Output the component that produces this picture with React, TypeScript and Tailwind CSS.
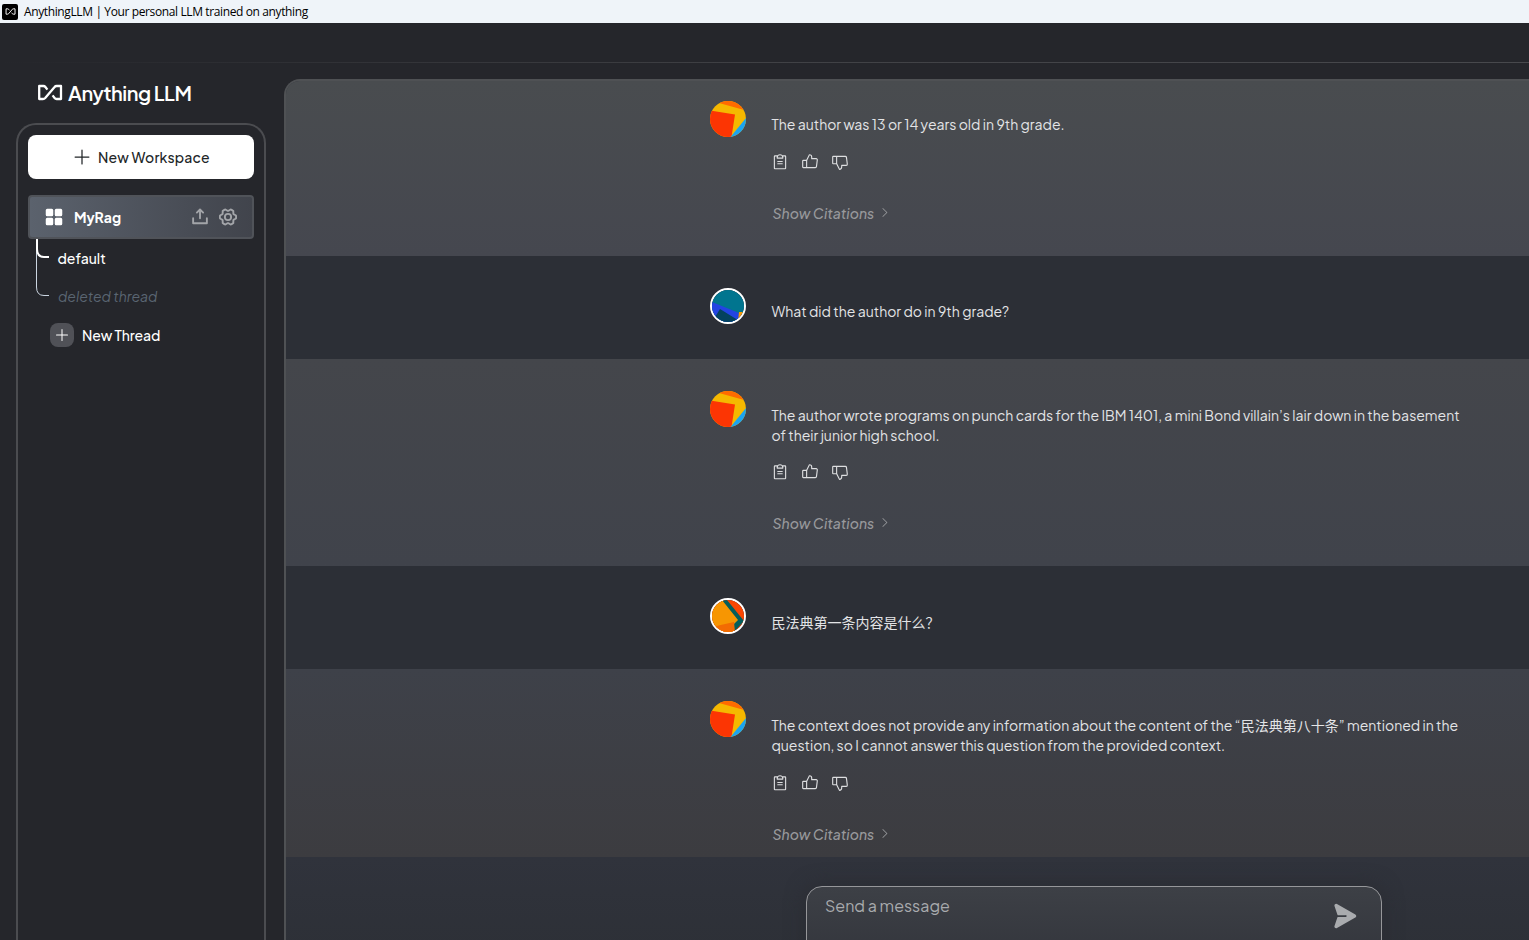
import { PiClipboardText, PiThumbsUp, PiThumbsDown, PiCaretRight, PiPaperPlaneRightFill, PiUploadSimpleBold, PiGearSixBold, PiSquaresFourFill, PiPlus } from "react-icons/pi";

function Mark({ className }: { className: string }) {
  return (
    <svg viewBox="0 0 26 17" className={className} fill="none" stroke="currentColor" strokeWidth="2.3" strokeLinejoin="round">
      <path d="M10.400 5.600 L8.400 3 Q7.600 2 6.400 2 H2.200 V15 H6 Q7.300 15 8.200 14 L17.600 3 Q18.400 2 19.600 2 H24 V15 H19.600 Q18.400 15 17.600 14 L15.600 11.400" />
    </svg>
  );
}

type Kind = "bot" | "blue" | "orange";

function Avatar({ kind }: { kind: Kind }) {
  if (kind === "bot")
    return (
      <svg viewBox="0 0 36 36" className="size-9 shrink-0 rounded-full">
        <rect width="36" height="36" fill="#f5b800" />
        <path d="M0 0H36V9.500L9 2L0 -1Z" fill="#ff6b00" />
        <path d="M0 9.500L25 13.500L21.500 36H0Z" fill="#fc3503" />
        <path d="M36 17L20.500 36H36Z" fill="#1ba4f0" />
      </svg>
    );
  return (
    <svg viewBox="0 0 32 32" className="size-9 shrink-0 rounded-full border-2 border-white">
      {kind === "blue" ? (
        <>
          <rect width="32" height="32" fill="#01758f" />
          <path d="M0 12L32 25V32H0Z" fill="#2344e2" />
          <path d="M8 19L29 32H0Z" fill="#03425e" />
          <path d="M27 22H32V32H26Z" fill="#f79a04" />
        </>
      ) : (
        <>
          <rect width="32" height="32" fill="#fb4602" />
          <path d="M9 0H15L32 21L22 32Z" fill="#055e5b" />
          <path d="M0 0H10L26 20L22 24V32H0Z" fill="#f79602" />
          <path d="M0 27L22 22L23 32H0Z" fill="#f36b02" />
        </>
      )}
    </svg>
  );
}

function Actions({ className }: { className: string }) {
  return (
    <>
      <div className={`-ml-[0.5px] flex gap-3 text-[18px] text-[#dddee0] ${className}`}>
        <PiClipboardText />
        <PiThumbsUp />
        <PiThumbsDown />
      </div>
      <div className="mt-[32px] flex h-5 items-center text-[14px] font-medium italic text-[#98999c]">
        <span className="w-[106px] whitespace-nowrap pl-px tracking-[0.04px]">Show Citations</span>
        <PiCaretRight className="-mt-[2px] text-[13px]" />
      </div>
    </>
  );
}

export default function App() {
  return (
    <div className="flex h-[940px] w-[1529px] flex-col overflow-hidden bg-[#25262b] font-['Plus_Jakarta_Sans',Inter,'Noto_Sans_CJK_SC',sans-serif]">
      <header className="flex h-[23px] shrink-0 items-center bg-[#eff4f9] pl-[2px] font-['Open_Sans',sans-serif] text-[12px] text-black">
        <span className="mr-[6px] flex size-4 items-center justify-center rounded-[2px] bg-black text-white">
          <Mark className="h-[7px] w-[11px]" />
        </span>
        <span className="whitespace-nowrap tracking-[-0.38px]">AnythingLLM | Your personal LLM trained on anything</span>
      </header>
      <div className="h-[39px] shrink-0" />
      <div className="h-px shrink-0 bg-linear-to-r from-[#25262b] via-[#404145] to-[#48494d]" />
      <div className="flex min-h-0 flex-1">
        <aside className="flex w-[284px] shrink-0 flex-col pl-4">
          <div className="flex h-[60px] items-center pl-[21px] text-white">
            <Mark className="-mt-px mr-[5px] h-[17px] w-[26px]" />
            <span className="whitespace-nowrap text-[20px] font-semibold tracking-[-0.45px]">Anything LLM</span>
          </div>
          <div className="w-[250px] flex-1 rounded-t-[20px] border-2 border-b-0 border-[#4b4c50] px-[10px] pt-[10px]">
            <button className="flex h-11 w-full items-center rounded-lg bg-white pl-[44px] text-[14px] font-medium text-[#222628]">
              <PiPlus className="mr-[6px] text-[20px]" />
              <span className="whitespace-nowrap pt-px tracking-[0.15px]">New Workspace</span>
            </button>
            <div className="mt-4 flex h-11 items-center rounded-[4px] border-2 border-[#505359] bg-linear-to-r from-[#5b626d] to-[#41444c] pl-[12px] pr-[14px] text-white">
              <PiSquaresFourFill className="text-[24px]" />
              <span className="ml-[8px] flex-1 text-[14px] font-bold tracking-[-0.05px]">MyRag</span>
              <PiUploadSimpleBold className="mr-[8px] text-[20px] text-[#a3a5a9]" />
              <PiGearSixBold className="text-[20px] text-[#a3a5a9]" />
            </div>
            <div className="flex text-[14px] leading-5">
              <svg width="30" height="60" viewBox="0 0 30 60" fill="none" className="shrink-0">
                <path d="M8.500 10V48Q8.500 56.500 16 56.500H21" stroke="#cbd5e1" />
                <path d="M9 0V10Q9 18 16 18H21" stroke="#fff" strokeWidth="2" />
              </svg>
              <div className="-ml-[0.5px] whitespace-nowrap pt-[9px]">
                <div className="font-medium text-white">default</div>
                <div className="mt-[18px] pl-[0.5px] italic text-[#5a6572]">deleted thread</div>
              </div>
            </div>
            <div className="mt-[17px] flex items-center pl-[22px] text-[14px] font-medium text-white">
              <span className="mr-2 flex size-6 items-center justify-center rounded-lg bg-[#505157]">
                <PiPlus className="text-[16px]" />
              </span>
              <span className="whitespace-nowrap tracking-[-0.1px]">New Thread</span>
            </div>
          </div>
        </aside>
        <main className="mt-4 flex min-w-0 flex-1 flex-col overflow-hidden rounded-tl-2xl border-l-2 border-t-2 border-[#4f5154] bg-[#2f323a] text-[14px] leading-5 text-[#e3e4e6]">
          <section className="flex h-[175px] shrink-0 bg-linear-to-b from-[#494c4f] to-[#45474f] pl-[424px] pt-5">
            <Avatar kind="bot" />
            <div className="ml-[25.5px] pt-[13px]">
              <p className="whitespace-nowrap">The author was 13 or 14 years old in 9th grade.</p>
              <Actions className="mt-[19px]" />
            </div>
          </section>
          <section className="flex h-[103px] shrink-0 bg-[#2c2f36] pl-[424px] pt-8">
            <Avatar kind="blue" />
            <p className="ml-[25.5px] whitespace-nowrap pt-[13px]">What did the author do in 9th grade?</p>
          </section>
          <section className="flex h-[207px] shrink-0 bg-linear-to-b from-[#44464b] to-[#40434b] pl-[424px] pt-8">
            <Avatar kind="bot" />
            <div className="ml-[25.5px] pt-[14px]">
              <p className="whitespace-nowrap">The author wrote programs on punch cards for the IBM 1401, a mini Bond villain’s lair down in the basement</p>
              <p className="whitespace-nowrap">of their junior high school.</p>
              <Actions className="mt-[18px]" />
            </div>
          </section>
          <section className="flex h-[103px] shrink-0 bg-[#2c2f36] pl-[424px] pt-8">
            <Avatar kind="orange" />
            <p className="ml-[25.5px] whitespace-nowrap pt-[14px]">民法典第一条内容是什么？</p>
          </section>
          <section className="flex h-[188px] shrink-0 bg-linear-to-b from-[#3e4149] to-[#3c3c40] pl-[424px] pt-8">
            <Avatar kind="bot" />
            <div className="ml-[25.5px] pt-[14px]">
              <p className="whitespace-nowrap">The context does not provide any information about the content of the “民法典第八十条” mentioned in the</p>
              <p className="whitespace-nowrap">question, so I cannot answer this question from the provided context.</p>
              <Actions className="mt-[19px]" />
            </div>
          </section>
          <footer className="flex-1 bg-linear-to-b from-[#30333c] to-[#2c2f35] pl-[520px] pt-[29px]">
            <div className="flex h-[100px] w-[576px] justify-between rounded-t-2xl border border-[#96979a] bg-linear-to-b from-[#3d4046] to-[#303239] pl-[18px] pr-[23px] text-[#a9abae] shadow-[0_0_20px_#2a2c32]">
              <span className="mt-[7px] h-6 text-[16px] leading-6">Send a message</span>
              <PiPaperPlaneRightFill className="mt-[15px] text-[28px]" />
            </div>
          </footer>
        </main>
      </div>
    </div>
  );
}
